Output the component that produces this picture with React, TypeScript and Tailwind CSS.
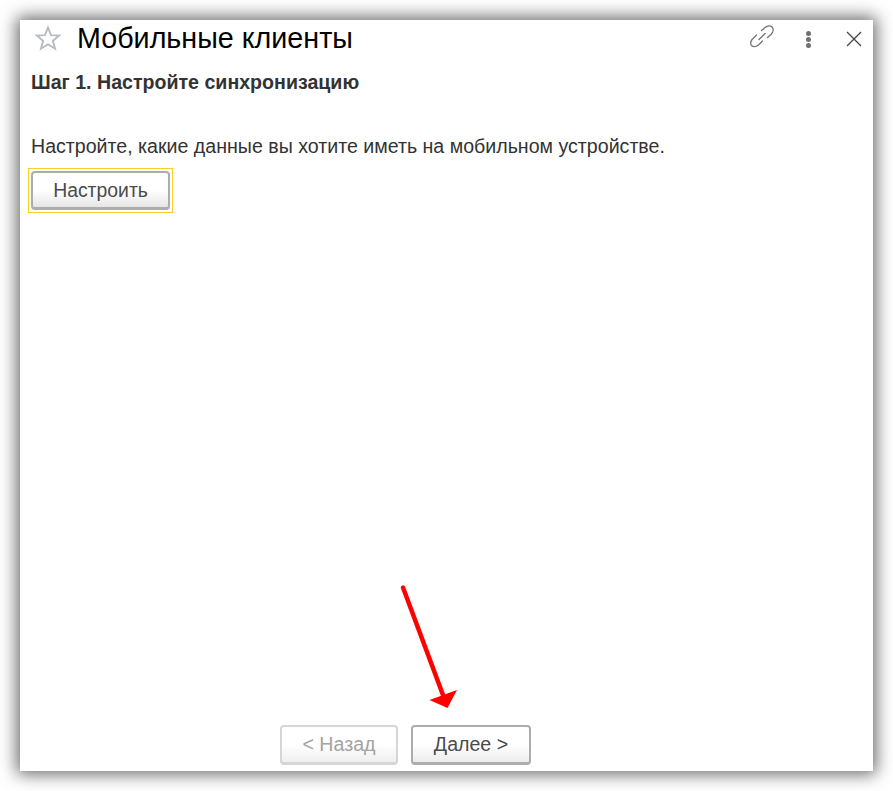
import { FC, ReactNode } from "react";

const FONT = "font-['Liberation_Sans',Arial,sans-serif]";

const WizardButton: FC<{ children: ReactNode; disabled?: boolean; width: string }> = ({
  children,
  disabled,
  width,
}) => (
  <button
    className={
      disabled
        ? `${width} h-[40px] rounded-[4px] border-2 border-b-[3px] border-[#d6d6d6] bg-gradient-to-b from-white via-white to-[#efefef] pt-[1px] text-[19.6px] text-[#a3a3a3]`
        : `${width} h-[40px] rounded-[4px] border-2 border-b-[3px] border-[#adadad] bg-gradient-to-b from-white via-white to-[#ececec] pt-[1px] text-[19.6px] text-[#4b4b4b]`
    }
  >
    {children}
  </button>
);

const App: FC = () => {
  return (
    <div className={`${FONT} relative h-[791px] w-[893px] overflow-hidden bg-white p-[20px]`}>
      <div className="flex h-[751px] w-[853px] flex-col bg-white pl-[11px] pr-[10px] shadow-[0_0_16px_3px_rgba(0,0,0,0.6)]">
        {/* title bar */}
        <div className="flex h-[38px] items-center">
          <svg width="26" height="26" viewBox="0 0 26 26" className="ml-[4px] mb-[2px] shrink-0">
            <path
              d="M13 2.5l3 7.6 8.2.5-6.3 5.2 2.1 7.9L13 19.3l-7 4.4 2.1-7.9-6.3-5.2 8.2-.5z"
              fill="none"
              stroke="#b5bcc4"
              strokeWidth="1.9"
            />
          </svg>
          <h1 className="ml-[16px] mb-[2px] text-[28.7px] leading-none text-black">Мобильные клиенты</h1>
          <div className="ml-auto flex items-center">
            <svg
              width="26"
              height="26"
              viewBox="0 0 26 26"
              fill="none"
              stroke="#777"
              strokeWidth="1.4"
              strokeLinecap="round"
              className="mb-[4px]"
            >
              <path d="M12.5 6.5L16 3.5C18.5 1.5 21.5 1.5 23 3S24.5 7.5 22.5 10L18.5 13.5" />
              <path d="M7.5 11L3.5 15C1.5 17 1 20 2.5 21.5S7 23 9.5 21L13.5 17" />
              <path d="M10 15.5l6-6" />
            </svg>
            <div className="ml-[31px] flex flex-col gap-[1px]">
              <span className="h-[5px] w-[5px] rounded-full bg-[#707070]" />
              <span className="h-[5px] w-[5px] rounded-full bg-[#707070]" />
              <span className="h-[5px] w-[5px] rounded-full bg-[#707070]" />
            </div>
            <svg width="16" height="16" viewBox="0 0 16 16" className="ml-[35px] mr-[1px]" stroke="#444" strokeWidth="1.3">
              <path d="M1 1l14 14M15 1L1 15" />
            </svg>
          </div>
        </div>

        <h2 className="mt-[14px] text-[19.6px] font-bold leading-[21px] text-[#333]">
          Шаг 1. Настройте синхронизацию
        </h2>
        <p className="mt-[43px] text-[19.6px] leading-[21px] text-[#333]">
          Настройте, какие данные вы хотите иметь на мобильном устройстве.
        </p>

        <div className="ml-[-3px] mt-[11px] w-[145px] border border-[#fbcb2a] p-[2px]">
          <button className="h-[39px] w-[139px] rounded-[4px] border-2 border-b-[3px] border-[#adadad] bg-gradient-to-b from-white via-white to-[#e6e6e6] pt-[1px] text-[19.4px] text-[#4b4b4b]">
            Настроить
          </button>
        </div>

        <div className="mt-auto mb-[6px] ml-[249px] flex gap-[13px]">
          <WizardButton disabled width="w-[118px]">
            &lt; Назад
          </WizardButton>
          <WizardButton width="w-[120px]">Далее &gt;</WizardButton>
        </div>
      </div>

      {/* annotation arrow */}
      <svg className="absolute left-[395px] top-[580px]" width="70" height="135" viewBox="0 0 70 135">
        <path d="M8 7.5L48 115" stroke="#ff0000" strokeWidth="4.5" strokeLinecap="round" />
        <path d="M34.5 120L62 110 52.5 128z" fill="#ff0000" />
      </svg>
    </div>
  );
};

export default App;
